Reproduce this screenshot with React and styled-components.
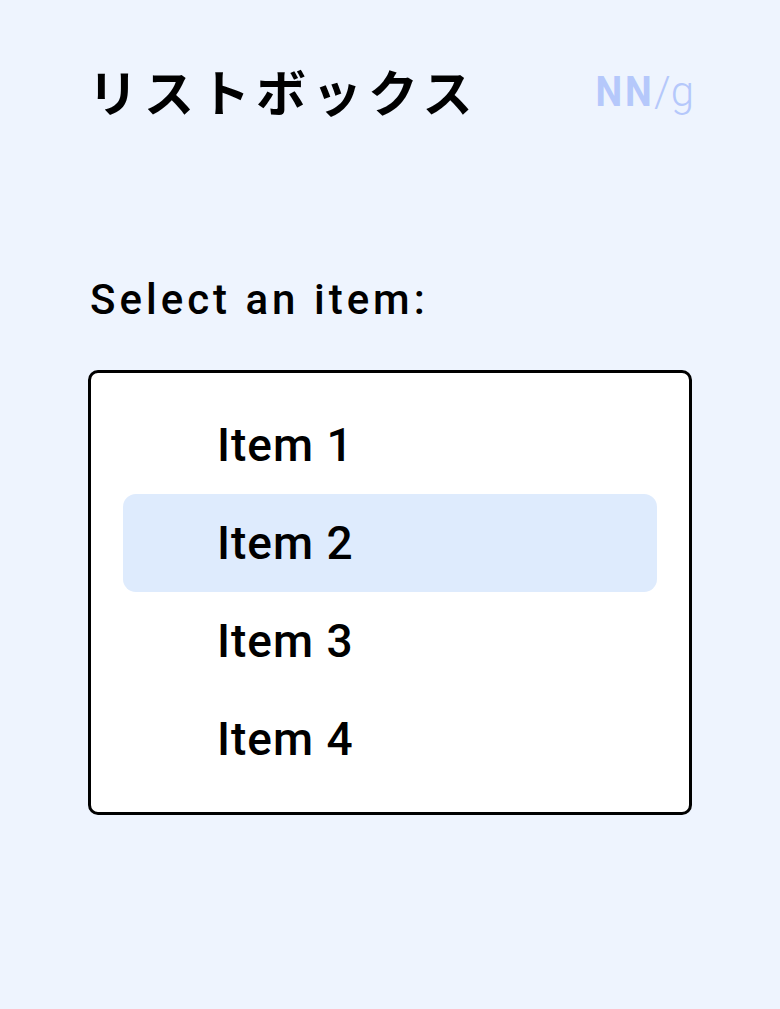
import React from 'react';
import styled, { createGlobalStyle } from 'styled-components';

const GlobalStyle = createGlobalStyle`
    html, body {
        margin: 0;
        padding: 0;
        background-color: #eef4fe;
    }
    body {
        font-family: "Roboto", "Noto Sans", sans-serif;
        color: #000;
    }
`;

//styles
const Page = styled.div`
    width: 780px;
    height: 1009px;
    box-sizing: border-box;
    padding: 56px 88px 0 88px;
    display: flex;
    flex-direction: column;
`;
const Header = styled.div`
    display: flex;
    align-items: center;
    justify-content: space-between;
`;
const Title = styled.h1`
    margin: 0;
    font-family: "Noto Sans CJK JP", sans-serif;
    font-size: 50px;
    font-weight: 700;
    letter-spacing: 6px;
    line-height: 68px;
`;
const Logo = styled.div`
    font-family: "Roboto", sans-serif;
    font-size: 42px;
    color: #b5c8fb;
    display: flex;
    align-items: baseline;
    line-height: 1;
    margin-top: 4px;
    margin-right: -2px;
`;
const LogoBold = styled.span`
    font-weight: 700;
    letter-spacing: 3px;
    transform: scaleX(0.9);
    transform-origin: right;
`;
const LogoLight = styled.span`
    font-weight: 300;
`;
const Label = styled.div`
    margin-top: 150px;
    margin-left: 2px;
    font-size: 42px;
    font-weight: 500;
    letter-spacing: 4px;
    line-height: 52px;
`;
const ListBox = styled.ul`
    list-style: none;
    margin: 44px 0 0 0;
    padding: 23px 32px 24px 32px;
    width: 604px;
    box-sizing: border-box;
    background-color: #fff;
    border: 3px solid #000;
    border-radius: 10px;
    display: flex;
    flex-direction: column;
`;
const Option = styled.li`
    height: 98px;
    display: flex;
    align-items: center;
    padding-left: 94px;
    border-radius: 13px;
    font-size: 46px;
    font-weight: 500;
    letter-spacing: 1px;
    background-color: ${p => (p.$selected ? '#deebfd' : 'transparent')};
`;

const items = ['Item 1', 'Item 2', 'Item 3', 'Item 4'];

const App = () => {
    return (
        <>
            <GlobalStyle />
            <Page>
                <Header>
                    <Title>リストボックス</Title>
                    <Logo>
                        <LogoBold>NN</LogoBold>
                        <LogoLight>/g</LogoLight>
                    </Logo>
                </Header>
                <Label>Select an item:</Label>
                <ListBox role="listbox">
                    {items.map((item, i) => (
                        <Option key={item} role="option" $selected={i === 1} aria-selected={i === 1}>
                            {item}
                        </Option>
                    ))}
                </ListBox>
            </Page>
        </>
    );
};

export default App;
